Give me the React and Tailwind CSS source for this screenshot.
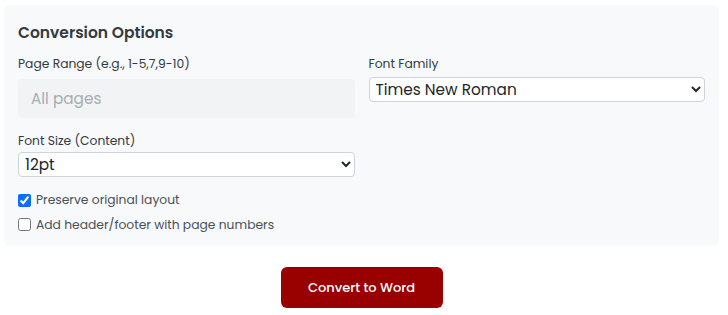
export default function App() {
  return (
    <div className="min-h-[315px] bg-white pl-[4px] pr-[9px] pt-[5px] font-['Poppins','Open_Sans',sans-serif] text-[#212529]">
      {/* Options panel */}
      <div className="rounded-md bg-[#f8f9fa] px-[14px] pb-[12px] pt-[18px]">
        <h3 className="mb-[13px] text-[15.5px] font-semibold leading-tight text-[#343a40]">
          Conversion Options
        </h3>

        <div className="grid grid-cols-2 gap-x-[14px]">
          <div className="mb-[14px]">
            <label className="mb-[5px] block text-[12.3px] text-[#343a40]">Page Range (e.g., 1-5,7,9-10)</label>
            <input
              type="text"
              placeholder="All pages"
              className="h-[39px] w-full rounded-[4px] bg-[#f1f3f5] px-[13px] text-[15.3px] placeholder:text-[#a8adb3] focus:outline-none"
            />
          </div>
          <div className="mb-[14px]">
            <label className="mb-[3px] block text-[12.3px] text-[#343a40]">Font Family</label>
            <select defaultValue="Times New Roman" className="h-[25px] w-full rounded-[4px] border border-[#ced4da] bg-white px-[2px] text-[15.3px]">
              <option>Times New Roman</option>
              <option>Arial</option>
              <option>Calibri</option>
            </select>
          </div>
          <div className="mb-[14px]">
            <label className="mb-[2px] block text-[12.3px] text-[#343a40]">Font Size (Content)</label>
            <select defaultValue="12pt" className="h-[25px] w-full rounded-[4px] border border-[#ced4da] bg-white px-[2px] text-[15.3px]">
              <option>10pt</option>
              <option>11pt</option>
              <option>12pt</option>
              <option>14pt</option>
            </select>
          </div>
        </div>

        <div className="flex flex-col gap-[6px] text-[12.3px] text-[#495057]">
          <label className="flex items-center gap-[5px]">
            <input type="checkbox" defaultChecked className="h-[13px] w-[13px] accent-[#0d6efd]" />
            Preserve original layout
          </label>
          <label className="flex items-center gap-[5px]">
            <input type="checkbox" className="h-[13px] w-[13px]" />
            Add header/footer with page numbers
          </label>
        </div>
      </div>

      <div className="flex justify-center pt-[21px]">
        <button className="h-[41px] w-[162px] rounded-[6px] bg-[#990000] text-[13px] font-medium text-white">
          Convert to Word
        </button>
      </div>
    </div>
  )
}
